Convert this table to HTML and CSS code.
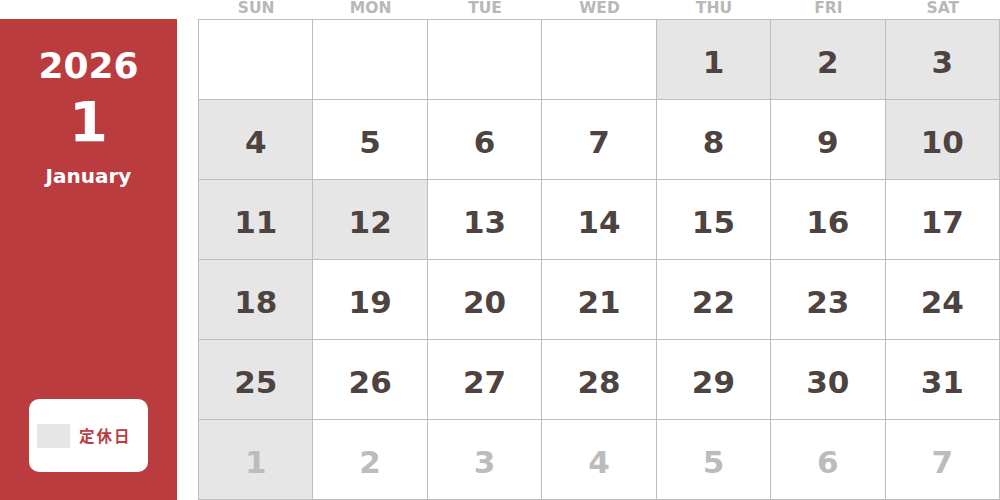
FILE: index.html
```html
<!DOCTYPE html>
<html lang="ja">
<head>
<meta charset="utf-8">
<title>2026 January</title>
<link rel="stylesheet" href="styles.css">
</head>
<body>
<div class="page">
  <aside class="side">
    <div class="year">2026</div>
    <div class="month-num">1</div>
    <div class="month-name">January</div>
    <div class="legend">
      <span class="swatch"></span>
      <span class="legend-text">定休日</span>
    </div>
  </aside>
  <main class="cal">
    <div class="heads">
      <div>SUN</div><div>MON</div><div>TUE</div><div>WED</div><div>THU</div><div>FRI</div><div>SAT</div>
    </div>
    <div class="grid">
      <div class="cell"></div>
      <div class="cell"></div>
      <div class="cell"></div>
      <div class="cell"></div>
      <div class="cell off">1</div>
      <div class="cell off">2</div>
      <div class="cell off">3</div>

      <div class="cell off">4</div>
      <div class="cell">5</div>
      <div class="cell">6</div>
      <div class="cell">7</div>
      <div class="cell">8</div>
      <div class="cell">9</div>
      <div class="cell off">10</div>

      <div class="cell off">11</div>
      <div class="cell off">12</div>
      <div class="cell">13</div>
      <div class="cell">14</div>
      <div class="cell">15</div>
      <div class="cell">16</div>
      <div class="cell">17</div>

      <div class="cell off">18</div>
      <div class="cell">19</div>
      <div class="cell">20</div>
      <div class="cell">21</div>
      <div class="cell">22</div>
      <div class="cell">23</div>
      <div class="cell">24</div>

      <div class="cell off">25</div>
      <div class="cell">26</div>
      <div class="cell">27</div>
      <div class="cell">28</div>
      <div class="cell">29</div>
      <div class="cell">30</div>
      <div class="cell">31</div>

      <div class="cell off next">1</div>
      <div class="cell next">2</div>
      <div class="cell next">3</div>
      <div class="cell next">4</div>
      <div class="cell next">5</div>
      <div class="cell next">6</div>
      <div class="cell next">7</div>
    </div>
  </main>
</div>
</body>
</html>
```

FILE: styles.css
```css
html, body {
  margin: 0;
  padding: 0;
  background: #ffffff;
}

body {
  font-family: "DejaVu Sans", Verdana, "Noto Sans CJK JP", sans-serif;
  font-weight: bold;
}

.page {
  display: flex;
  width: 1000px;
  height: 500px;
  gap: 21px;
}

.side {
  margin-top: 19px;
  width: 177px;
  height: 481px;
  background: #bb3c3f;
  color: #ffffff;
  display: flex;
  flex-direction: column;
  align-items: center;
  box-sizing: border-box;
  padding-top: 27px;
}

.year {
  font-size: 36px;
  line-height: 40px;
}

.month-num {
  font-size: 56px;
  line-height: 60px;
  margin-top: 6px;
}

.month-name {
  font-size: 20px;
  line-height: 24px;
  margin-top: 12px;
}

.legend {
  margin-top: auto;
  margin-bottom: 28px;
  width: 119px;
  height: 73px;
  background: #ffffff;
  border-radius: 10px;
  display: flex;
  align-items: center;
  padding-left: 8px;
  box-sizing: border-box;
  gap: 9px;
}

.swatch {
  width: 33px;
  height: 24px;
  background: #e6e6e6;
}

.legend-text {
  color: #bb3c3f;
  font-family: "Noto Sans CJK JP", sans-serif;
  font-size: 15.5px;
  font-weight: bold;
  letter-spacing: 2px;
  margin-top: -2px;
}

.cal {
  width: 802px;
  display: flex;
  flex-direction: column;
}

.heads {
  display: grid;
  grid-template-columns: repeat(7, 1fr);
  height: 19px;
  box-sizing: border-box;
  padding-left: 1px;
  padding-top: 1px;
  color: #b8b8b8;
  font-size: 15.5px;
  line-height: 15px;
  text-align: center;
}

.grid {
  display: grid;
  grid-template-columns: repeat(7, 1fr);
  grid-auto-rows: 80px;
  border-top: 1px solid #bdbdbd;
  border-left: 1px solid #bdbdbd;
}

.cell {
  border-right: 1px solid #bdbdbd;
  border-bottom: 1px solid #bdbdbd;
  display: flex;
  align-items: center;
  justify-content: center;
  font-size: 31px;
  color: #4d4340;
  padding-top: 4px;
  box-sizing: border-box;
}

.cell.off {
  background: #e6e6e6;
}

.cell.next {
  color: #bcbcbc;
}
```
